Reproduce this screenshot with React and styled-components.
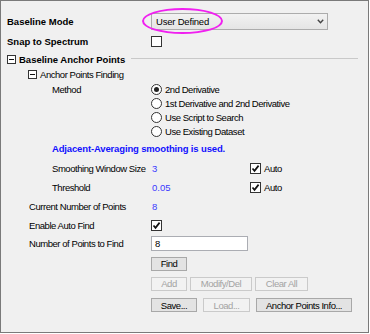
import React from "react";
import styled, { createGlobalStyle } from "styled-components";

const GlobalStyle = createGlobalStyle`
  html, body {
    margin: 0;
    padding: 0;
    background: #ffffff;
  }
  body {
    font-family: "Liberation Sans", Arial, sans-serif;
  }
`;

const Frame = styled.div`
  position: relative;
  width: 369px;
  height: 333px;
  box-sizing: border-box;
  border: 1px solid #7a7a7a;
  background: #f0f0f0;
  padding: 11px 10px 0 6px;
  display: flex;
  flex-direction: column;
  color: #000;
  font-size: 9.5px;
  letter-spacing: -0.45px;
`;

const Row = styled.div`
  display: flex;
  align-items: center;
  height: ${(p) => p.h}px;
  padding-left: ${(p) => p.indent || 0}px;
`;

const Label = styled.div`
  width: ${(p) => 144 - (p.indent || 0)}px;
  flex-shrink: 0;
  white-space: nowrap;
  font-weight: ${(p) => (p.bold ? "bold" : "normal")};
  letter-spacing: ${(p) => (p.bold ? "0" : "-0.45px")};
`;

const Dropdown = styled.div`
  width: 177px;
  height: 17px;
  box-sizing: border-box;
  border: 1px solid #acacac;
  background: linear-gradient(#f2f2f2, #e5e5e5);
  display: flex;
  align-items: center;
  justify-content: space-between;
  padding: 0 3px 0 4px;
`;

const Box = styled.div`
  width: 11px;
  height: 11px;
  box-sizing: border-box;
  border: 1px solid #333;
  background: #fff;
  display: flex;
  align-items: center;
  justify-content: center;
  flex-shrink: 0;
`;

const RadioDot = styled.div`
  width: 11px;
  height: 11px;
  box-sizing: border-box;
  border: 1px solid #333;
  border-radius: 50%;
  background: #fff;
  display: flex;
  align-items: center;
  justify-content: center;
  flex-shrink: 0;
  &::after {
    content: "";
    display: ${(p) => (p.checked ? "block" : "none")};
    width: 5px;
    height: 5px;
    border-radius: 50%;
    background: #222;
  }
`;

const Option = styled.div`
  display: flex;
  align-items: center;
  gap: 3px;
  white-space: nowrap;
`;

const SectionHead = styled.div`
  display: flex;
  align-items: center;
  gap: 3px;
  flex: 1;
  font-weight: ${(p) => (p.bold ? "bold" : "normal")};
  letter-spacing: ${(p) => (p.bold ? "0" : "-0.45px")};
  white-space: nowrap;
`;

const Rule = styled.div`
  flex: 1;
  height: 0;
  border-top: 1px solid #c9c9c9;
  margin-left: 3px;
  margin-top: -1px;
`;

const Note = styled.div`
  color: #1010ff;
  font-weight: bold;
  letter-spacing: -0.15px;
  white-space: nowrap;
`;

const Value = styled.div`
  width: ${(p) => p.w || 99}px;
  color: #3a3aff;
  letter-spacing: 0;
  padding-left: 1px;
  box-sizing: border-box;
`;

const Input = styled.div`
  width: 97px;
  height: 15px;
  box-sizing: border-box;
  border: 1px solid #abadb3;
  background: #fff;
  display: flex;
  align-items: center;
  padding-left: 3px;
  letter-spacing: 0;
`;

const ButtonRow = styled.div`
  display: flex;
  gap: ${(p) => p.gap || 6}px;
`;

const Button = styled.div`
  width: ${(p) => p.w}px;
  height: 14px;
  box-sizing: border-box;
  border: 1px solid ${(p) => (p.disabled ? "#cacaca" : "#a8a8a8")};
  background: ${(p) => (p.disabled ? "#f2f2f2" : "#e3e3e3")};
  color: ${(p) => (p.disabled ? "#a3a3a3" : "#000")};
  display: flex;
  align-items: center;
  justify-content: center;
  white-space: nowrap;
`;

const Highlight = styled.div`
  position: absolute;
  left: 141px;
  top: 7px;
  width: 81px;
  height: 26px;
  box-sizing: border-box;
  border: 2px solid #f020f0;
  border-radius: 50%;
  pointer-events: none;
`;

function Check() {
  return (
    <svg width="9" height="9" viewBox="0 0 9 9">
      <path d="M1.5 4.5 L3.5 6.8 L7.6 1.6" fill="none" stroke="#111" strokeWidth="1.7" />
    </svg>
  );
}

function Checkbox({ checked }) {
  return <Box>{checked ? <Check /> : null}</Box>;
}

function Collapse() {
  return (
    <svg width="9" height="9" viewBox="0 0 9 9" style={{ flexShrink: 0 }}>
      <rect x="0.5" y="0.5" width="8" height="8" fill="#fff" stroke="#333" />
      <path d="M2 4.5 H7" stroke="#111" />
    </svg>
  );
}

function Chevron() {
  return (
    <svg width="7" height="5" viewBox="0 0 7 5">
      <path d="M0.8 0.8 L3.5 3.8 L6.2 0.8" fill="none" stroke="#444" strokeWidth="1.4" />
    </svg>
  );
}

export default function App() {
  return (
    <>
      <GlobalStyle />
      <Frame>
        <Row h={19}>
          <Label bold>Baseline Mode</Label>
          <Dropdown>
            <span style={{ letterSpacing: "-0.2px" }}>User Defined</span>
            <Chevron />
          </Dropdown>
        </Row>
        <Row h={20}>
          <Label bold>Snap to Spectrum</Label>
          <Checkbox />
        </Row>
        <Row h={16}>
          <SectionHead bold>
            <Collapse />
            Baseline Anchor Points
            <Rule />
          </SectionHead>
        </Row>
        <Row h={15} indent={21}>
          <SectionHead>
            <Collapse />
            Anchor Points Finding
          </SectionHead>
        </Row>
        <Row h={14} indent={45}>
          <Label indent={45}>Method</Label>
          <Option>
            <RadioDot checked />
            2nd Derivative
          </Option>
        </Row>
        <Row h={14} indent={45}>
          <Label indent={45} />
          <Option>
            <RadioDot />
            1st Derivative and 2nd Derivative
          </Option>
        </Row>
        <Row h={14} indent={45}>
          <Label indent={45} />
          <Option>
            <RadioDot />
            Use Script to Search
          </Option>
        </Row>
        <Row h={15} indent={45}>
          <Label indent={45} />
          <Option>
            <RadioDot />
            Use Existing Dataset
          </Option>
        </Row>
        <Row h={19} indent={45}>
          <Note>Adjacent-Averaging smoothing is used.</Note>
        </Row>
        <Row h={20} indent={45}>
          <Label indent={45}>Smoothing Window Size</Label>
          <Value>3</Value>
          <Option>
            <Checkbox checked />
            Auto
          </Option>
        </Row>
        <Row h={19} indent={45}>
          <Label indent={45}>Threshold</Label>
          <Value>0.05</Value>
          <Option>
            <Checkbox checked />
            Auto
          </Option>
        </Row>
        <Row h={19} indent={22}>
          <Label indent={22}>Current Number of Points</Label>
          <Value>8</Value>
        </Row>
        <Row h={18} indent={22}>
          <Label indent={22}>Enable Auto Find</Label>
          <Checkbox checked />
        </Row>
        <Row h={19} indent={22}>
          <Label indent={22}>Number of Points to Find</Label>
          <Input>8</Input>
        </Row>
        <Row h={21}>
          <Label />
          <Button w={36}>Find</Button>
        </Row>
        <Row h={19}>
          <Label />
          <ButtonRow gap={3}>
            <Button w={36} disabled>
              Add
            </Button>
            <Button w={62} disabled>
              Modify/Del
            </Button>
            <Button w={53} disabled>
              Clear All
            </Button>
          </ButtonRow>
        </Row>
        <Row h={24}>
          <Label />
          <ButtonRow gap={6}>
            <Button w={46}>Save...</Button>
            <Button w={47} disabled>
              Load...
            </Button>
            <Button w={96}>Anchor Points Info...</Button>
          </ButtonRow>
        </Row>
        <Highlight />
      </Frame>
    </>
  );
}
